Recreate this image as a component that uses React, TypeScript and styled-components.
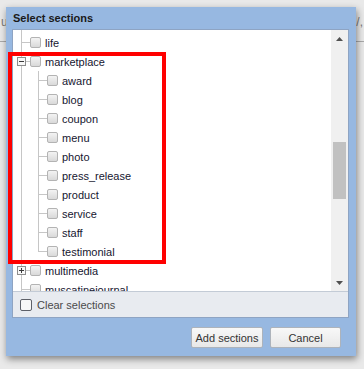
import React from 'react';
import styled, { createGlobalStyle } from 'styled-components';

const Global = createGlobalStyle`
  html, body { margin: 0; padding: 0; }
  body {
    width: 364px;
    height: 369px;
    overflow: hidden;
    background: #e9e9e9;
    font-family: "Liberation Sans", Arial, sans-serif;
  }
`;

const Page = styled.div`
  position: relative;
  width: 364px;
  height: 369px;
`;

const Backdrop = styled.div`
  display: flex;
  flex-direction: column;
  padding-top: 15px;
`;

const BackdropHeader = styled.div`
  display: flex;
  justify-content: space-between;
  padding: 0 1px 0 1px;
  font-size: 12px;
  color: #7a7a7a;
  height: 14px;
`;

const BackdropRule = styled.div`
  margin-top: 12px;
  border-top: 1px solid #a9a9a9;
`;

const Dialog = styled.div`
  position: absolute;
  left: 6px;
  top: 7px;
  width: 350px;
  height: 349px;
  display: flex;
  flex-direction: column;
  background: #97b8e1;
  box-shadow: 1px 3px 7px rgba(0, 0, 0, 0.45);
`;

const TitleBar = styled.div`
  height: 22px;
  display: flex;
  align-items: center;
  padding: 0 7px;
  font-size: 11px;
  font-weight: bold;
  color: #1a1a1a;
`;

const Panel = styled.div`
  margin: 0 7px 0 6px;
  border: 1px solid #8ea4c3;
  display: flex;
  flex-direction: column;
`;

const TreeArea = styled.div`
  height: 261px;
  display: flex;
  background: #ffffff;
`;

const TreeScroll = styled.div`
  flex: 1;
  overflow: hidden;
  padding-top: 3px;
  position: relative;
`;

const TreeLead = styled.div`
  position: absolute;
  left: 8px;
  top: 0;
  width: 1px;
  height: 3px;
  background: #c6c6c6;
`;

const Row = styled.div`
  height: 19px;
  display: flex;
  align-items: center;
`;

const Indent = styled.div<{ $line: boolean }>`
  width: 17px;
  height: 19px;
  flex: none;
  position: relative;
  &::before {
    content: '';
    display: ${(p) => (p.$line ? 'block' : 'none')};
    position: absolute;
    left: 8px;
    top: 0;
    bottom: 0;
    width: 1px;
    background: #c6c6c6;
  }
`;

const Connector = styled.div<{ $last: boolean }>`
  width: 17px;
  height: 19px;
  flex: none;
  position: relative;
  &::before {
    content: '';
    position: absolute;
    left: 8px;
    top: 0;
    height: ${(p) => (p.$last ? '10px' : '19px')};
    width: 1px;
    background: #c6c6c6;
  }
  &::after {
    content: '';
    position: absolute;
    left: 8px;
    right: 0;
    top: 9px;
    height: 1px;
    background: #c6c6c6;
  }
`;

const Expander = styled.div`
  position: absolute;
  left: 4px;
  top: 5px;
  width: 7px;
  height: 7px;
  border: 1px solid #8d8d8d;
  background: #f8f8f8;
  z-index: 1;
  display: flex;
  align-items: center;
  justify-content: center;
`;

const Check = styled.span`
  width: 11px;
  height: 11px;
  flex: none;
  box-sizing: border-box;
  border: 1px solid #b3b3b3;
  border-radius: 2px;
  background: linear-gradient(#f3f3f3, #d9d9d9);
`;

const Label = styled.span`
  margin-left: 4px;
  font-size: 11px;
  color: #161630;
  white-space: nowrap;
`;

const Scrollbar = styled.div`
  width: 17px;
  flex: none;
  display: flex;
  flex-direction: column;
  background: #f0f0f0;
`;

const ArrowButton = styled.div`
  height: 17px;
  display: flex;
  align-items: center;
  justify-content: center;
`;

const Track = styled.div`
  flex: 1;
  display: flex;
  flex-direction: column;
  align-items: center;
`;

const Thumb = styled.div`
  width: 13px;
  background: #c1c1c1;
`;

const Footer = styled.div`
  height: 25px;
  border-top: 1px solid #c3cbd6;
  background: #e8ebf0;
  display: flex;
  align-items: center;
  padding-left: 7px;
`;

const FooterCheck = styled.span`
  width: 12px;
  height: 12px;
  box-sizing: border-box;
  border: 1.5px solid #5d6068;
  border-radius: 2px;
  background: #f7f7f7;
`;

const FooterLabel = styled.span`
  margin-left: 5px;
  font-size: 11px;
  color: #4a4a4a;
`;

const ButtonRow = styled.div`
  display: flex;
  justify-content: flex-end;
  gap: 7px;
  padding: 9px 15px 0 0;
`;

const Button = styled.button<{ $w: number }>`
  width: ${(p) => p.$w}px;
  height: 21px;
  padding: 0;
  font-family: "Liberation Sans", Arial, sans-serif;
  font-size: 11px;
  color: #333;
  background: linear-gradient(#f8f8f8, #e8e8e8);
  border: 1px solid #adb3bb;
  border-radius: 2px;
`;

const Annotation = styled.div`
  position: absolute;
  left: 8px;
  top: 52px;
  width: 158px;
  height: 212px;
  box-sizing: border-box;
  border: 4px solid #ff0000;
`;

type Item = { name: string; level: number; last: boolean; ancestors: boolean[]; exp?: '+' | '-' };

const children = ['award', 'blog', 'coupon', 'menu', 'photo', 'press_release', 'product', 'service', 'staff', 'testimonial'];

const items: Item[] = [
  { name: 'life', level: 0, last: false, ancestors: [] },
  { name: 'marketplace', level: 0, last: false, ancestors: [], exp: '-' },
  ...children.map((c, i) => ({ name: c, level: 1, last: i === children.length - 1, ancestors: [true] })),
  { name: 'multimedia', level: 0, last: false, ancestors: [], exp: '+' },
  { name: 'muscatinejournal', level: 0, last: false, ancestors: [] },
];

const Sign = ({ kind }: { kind: '+' | '-' }) => (
  <svg width="7" height="7" viewBox="0 0 7 7">
    <rect x="1" y="3" width="5" height="1" fill="#3a3a3a" />
    {kind === '+' && <rect x="3" y="1" width="1" height="5" fill="#3a3a3a" />}
  </svg>
);

const Tri = ({ up }: { up: boolean }) => (
  <svg width="7" height="4" viewBox="0 0 7 4">
    <polygon points={up ? '0,4 7,4 3.5,0' : '0,0 7,0 3.5,4'} fill="#505050" />
  </svg>
);

export default function App() {
  return (
    <Page>
      <Global />
      <Backdrop>
        <BackdropHeader>
          <span>u</span>
          <span>/,</span>
        </BackdropHeader>
        <BackdropRule />
      </Backdrop>
      <Dialog>
        <TitleBar>Select sections</TitleBar>
        <Panel>
          <TreeArea>
            <TreeScroll>
              <TreeLead />
              {items.map((it) => (
                <Row key={it.name}>
                  {it.ancestors.map((a, i) => (
                    <Indent key={i} $line={a} />
                  ))}
                  <Connector $last={it.last}>
                    {it.exp && (
                      <Expander>
                        <Sign kind={it.exp} />
                      </Expander>
                    )}
                  </Connector>
                  <Check />
                  <Label>{it.name}</Label>
                </Row>
              ))}
            </TreeScroll>
            <Scrollbar>
              <ArrowButton>
                <Tri up />
              </ArrowButton>
              <Track>
                <Thumb style={{ marginTop: 95, height: 57 }} />
              </Track>
              <ArrowButton>
                <Tri up={false} />
              </ArrowButton>
            </Scrollbar>
          </TreeArea>
          <Footer>
            <FooterCheck />
            <FooterLabel>Clear selections</FooterLabel>
          </Footer>
        </Panel>
        <ButtonRow>
          <Button $w={72}>Add sections</Button>
          <Button $w={71}>Cancel</Button>
        </ButtonRow>
      </Dialog>
      <Annotation />
    </Page>
  );
}
